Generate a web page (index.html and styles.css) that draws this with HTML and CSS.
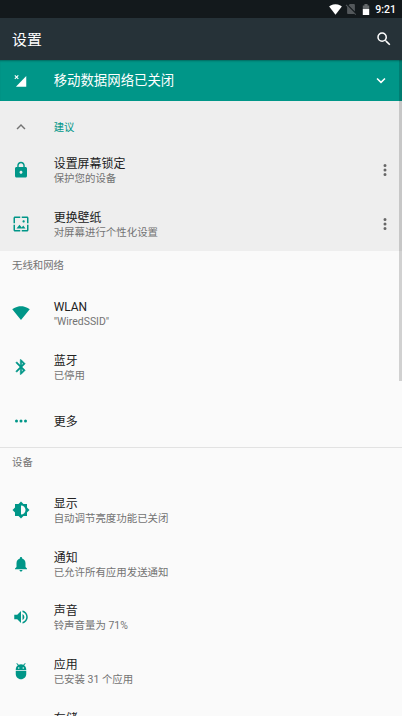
FILE: index.html
```html
<!DOCTYPE html>
<html lang="zh-CN">
<head>
<meta charset="utf-8">
<title>设置</title>
<link rel="stylesheet" href="styles.css">
</head>
<body>
<div class="screen">
  <div class="status">
    <svg class="s-wifi" viewBox="0 0 26 22"><path d="M13 21.500L.3 5C1 4.300 6 .5 13 .5S25 4.300 25.700 5z"/></svg>
    <svg class="s-sim" viewBox="3 3 18 18"><path d="M19 5c0-1.100-.9-2-2-2h-7L7.660 5.340 19 16.680zM3.650 3.880L2.380 5.150 5 7.770V19c0 1.100.9 2 2 2h10.010c.35 0 .67-.1.960-.26l1.880 1.880 1.270-1.270z"/></svg>
    <svg class="s-bat" viewBox="0 0 8 12"><path class="dim" d="M.5 1.500h1.800V0h3.400v1.500h1.800V6h-7z"/><path d="M.5 5.500h7V12h-7z"/></svg>
    <span class="clock">9:21</span>
  </div>
  <header class="appbar">
    <h1>设置</h1>
    <svg class="icon" viewBox="0 0 24 24"><path d="M15.500 14h-.79l-.28-.27A6.471 6.471 0 0 0 16 9.500 6.500 6.500 0 1 0 9.500 16c1.610 0 3.090-.59 4.230-1.570l.27.28v.79l5 4.990L20.490 19l-4.990-5zm-6 0C7.010 14 5 11.990 5 9.500S7.010 5 9.500 5 14 7.010 14 9.500 11.990 14 9.500 14z"/></svg>
  </header>
  <div class="banner">
    <svg class="icon lead" viewBox="0 0 24 24"><path d="M19 5.200v14.300H5.200z"/><path class="cross" d="M3.800 4.500l4.600 4.600M8.400 4.500l-4.600 4.600"/></svg>
    <span class="banner-text">移动数据网络已关闭</span>
    <svg class="icon" viewBox="0 0 24 24"><path d="M7.410 7.840L12 12.420l4.590-4.580L18 9.250l-6 6-6-6z"/></svg>
  </div>
  <section class="suggest">
    <div class="suggest-head">
      <svg class="icon lead" viewBox="0 0 24 24"><path d="M7.410 15.410L12 10.830l4.590 4.580L18 14l-6-6-6 6z"/></svg>
      <span>建议</span>
    </div>
    <div class="row">
      <svg class="icon lead" viewBox="0 0 24 24"><path d="M18 8h-1V6c0-2.760-2.240-5-5-5S7 3.240 7 6v2H6c-1.100 0-2 .9-2 2v10c0 1.100.9 2 2 2h12c1.100 0 2-.9 2-2V10c0-1.100-.9-2-2-2zm-6 9c-1.100 0-2-.9-2-2s.9-2 2-2 2 .9 2 2-.9 2-2 2zm3.100-9H8.900V6c0-1.710 1.390-3.100 3.100-3.100s3.100 1.390 3.100 3.100z"/></svg>
      <div class="text"><div class="title">设置屏幕锁定</div><div class="summary">保护您的设备</div></div>
      <svg class="icon menu" viewBox="0 0 24 24"><path d="M12 8a2 2 0 1 0 0-4 2 2 0 0 0 0 4zm0 2a2 2 0 1 0 0 4 2 2 0 0 0 0-4zm0 6a2 2 0 1 0 0 4 2 2 0 0 0 0-4z"/></svg>
    </div>
    <div class="row">
      <svg class="icon lead" viewBox="0 0 24 24"><path d="M4 4h7V2H4c-1.100 0-2 .9-2 2v7h2zm6 9l-4 5h12l-3-4-2.030 2.710zm7-4.500c0-.83-.67-1.500-1.500-1.500S14 7.670 14 8.500s.67 1.500 1.500 1.500S17 9.330 17 8.500zM20 2h-7v2h7v7h2V4c0-1.100-.9-2-2-2zm0 18h-7v2h7c1.100 0 2-.9 2-2v-7h-2zM4 13H2v7c0 1.100.9 2 2 2h7v-2H4z"/></svg>
      <div class="text"><div class="title">更换壁纸</div><div class="summary">对屏幕进行个性化设置</div></div>
      <svg class="icon menu" viewBox="0 0 24 24"><path d="M12 8a2 2 0 1 0 0-4 2 2 0 0 0 0 4zm0 2a2 2 0 1 0 0 4 2 2 0 0 0 0-4zm0 6a2 2 0 1 0 0 4 2 2 0 0 0 0-4z"/></svg>
    </div>
  </section>
  <section class="group">
    <h2>无线和网络</h2>
    <div class="row">
      <svg class="icon lead" viewBox="0 0 24 24"><path d="M12.010 21.490L23.640 7c-.45-.34-4.930-4-11.640-4C5.280 3 .81 6.660.36 7l11.630 14.490.010.010z"/></svg>
      <div class="text"><div class="title">WLAN</div><div class="summary">"WiredSSID"</div></div>
    </div>
    <div class="row">
      <svg class="icon lead" viewBox="0 0 24 24"><path class="bold" d="M17.710 7.710L12 2h-1v7.590L6.410 5 5 6.410 10.590 12 5 17.590 6.410 19 11 14.410V22h1l5.710-5.710-4.300-4.290zM13 5.830l1.880 1.880L13 9.590zm1.880 10.460L13 18.170v-3.760z"/></svg>
      <div class="text"><div class="title">蓝牙</div><div class="summary">已停用</div></div>
    </div>
    <div class="row">
      <svg class="icon lead" viewBox="0 0 24 24"><path d="M6 10a2 2 0 1 0 0 4 2 2 0 0 0 0-4zm12 0a2 2 0 1 0 0 4 2 2 0 0 0 0-4zm-6 0a2 2 0 1 0 0 4 2 2 0 0 0 0-4z"/></svg>
      <div class="text"><div class="title">更多</div></div>
    </div>
  </section>
  <section class="group divided">
    <h2>设备</h2>
    <div class="row">
      <svg class="icon lead" viewBox="0 0 24 24"><path d="M20 15.310L23.310 12 20 8.690V4h-4.690L12 .69 8.690 4H4v4.690L.69 12 4 15.310V20h4.690L12 23.310 15.310 20H20zM12 18V6c3.310 0 6 2.690 6 6s-2.690 6-6 6z"/></svg>
      <div class="text"><div class="title">显示</div><div class="summary">自动调节亮度功能已关闭</div></div>
    </div>
    <div class="row">
      <svg class="icon lead" viewBox="0 0 24 24"><path d="M12 22c1.100 0 2-.9 2-2h-4c0 1.100.9 2 2 2zm6-6v-5c0-3.070-1.640-5.640-4.500-6.320V4c0-.83-.67-1.500-1.500-1.500s-1.500.67-1.500 1.500v.68C7.630 5.360 6 7.920 6 11v5l-2 2v1h16v-1z"/></svg>
      <div class="text"><div class="title">通知</div><div class="summary">已允许所有应用发送通知</div></div>
    </div>
    <div class="row">
      <svg class="icon lead" viewBox="0 0 24 24"><path d="M3 9v6h4l5 5V4L7 9zm13.500 3A4.500 4.500 0 0 0 14 7.970v8.050c1.480-.73 2.500-2.250 2.500-4.020zM14 3.230v2.060c2.890.86 5 3.540 5 6.710s-2.110 5.850-5 6.710v2.060c4.010-.91 7-4.490 7-8.770s-2.990-7.860-7-8.770z"/></svg>
      <div class="text"><div class="title">声音</div><div class="summary">铃声音量为 71%</div></div>
    </div>
    <div class="row">
      <svg class="icon lead" viewBox="0 0 24 24"><path d="M5 16c0 3.870 3.130 7 7 7s7-3.130 7-7v-4H5zM16.120 4.370l2.100-2.100-.82-.83-2.300 2.310C14.160 3.280 13.120 3 12 3s-2.160.28-3.090.75L6.600 1.440l-.82.83 2.100 2.100C6.140 5.640 5 7.680 5 10v1h14v-1c0-2.320-1.140-4.360-2.880-5.630zM9 9a1 1 0 1 1 0-2 1 1 0 0 1 0 2zm6 0a1 1 0 1 1 0-2 1 1 0 0 1 0 2z"/></svg>
      <div class="text"><div class="title">应用</div><div class="summary">已安装 31 个应用</div></div>
    </div>
    <div class="row">
      <svg class="icon lead" viewBox="0 0 24 24"><path d="M2 20h20v-4H2zM2 4v4h20V4zm0 10h20v-4H2z"/></svg>
      <div class="text"><div class="title">存储</div><div class="summary"></div></div>
    </div>
  </section>
  <div class="scrollbar"></div>
</div>
</body>
</html>
```
FILE: styles.css
```css
* { box-sizing: border-box; }
body {
  margin: 0;
  font-family: Roboto, "Noto Sans CJK SC", sans-serif;
  background: #fafafa;
}
.screen {
  position: relative;
  height: 716px;
  overflow: hidden;
}
svg { display: block; fill: currentColor; flex: none; }
.icon { width: 18px; height: 18px; }
.lead { margin-right: 23.700px; }
.status {
  height: 18px;
  display: flex;
  align-items: center;
  padding-right: 6px;
  justify-content: flex-end;
  background: #13191c;
  color: #fff;
}
.s-wifi { width: 13px; height: 11px; margin-right: 4px; }
.s-sim { width: 10px; height: 10px; margin-right: 6px; color: #53585b; overflow: visible; }
.s-bat { width: 8px; height: 11px; margin-right: 5px; }
.dim { fill: #65696b; }
.clock { font-size: 10.500px; font-weight: 500; line-height: 18px; padding-top: 1px; }
.appbar {
  height: 42px;
  display: flex;
  align-items: center;
  justify-content: space-between;
  padding: 0 9px 0 12px;
  background: #263238;
  color: #fff;
}
.appbar h1 { margin: 0; padding-top: 1px; font-size: 14.900px; font-weight: 400; line-height: 22px; }
.banner {
  height: 41px;
  display: flex;
  align-items: center;
  padding: 0 12px;
  background: #009688;
  color: #fff;
  box-shadow: inset 0 2px 2px -1px rgba(0, 0, 0, .3);
}
.banner-text { flex: 1; padding-top: 1px; font-size: 13.400px; line-height: 20px; }
.cross { stroke: #fff; stroke-width: 1.5; fill: none; }
.bold { stroke: currentColor; stroke-width: .6; }
.suggest { background: #eee; height: 149.500px; }
.suggest-head {
  height: 42px;
  display: flex;
  align-items: center;
  padding: 10px 12px 0;
  color: #737373;
  font-size: 10.400px;
}
.suggest-head span { color: #009688; line-height: 14px; padding-top: 1px; }
.row {
  height: 53.700px;
  display: flex;
  align-items: center;
  padding: 0 7.800px 0 12px;
  color: #009688;
}
.text { flex: 1; padding-top: 2px; }
.title { font-size: 11.940px; line-height: 16px; color: #212121; }
.summary { min-height: 14px; font-size: 10.440px; line-height: 14px; color: #737373; }
.menu { color: #666; }
.group h2 {
  margin: 0;
  height: 36px;
  padding: 7.400px 12px 0;
  font-size: 10.400px;
  font-weight: 400;
  line-height: 16px;
  color: #737373;
}
.divided { border-top: 1px solid #e2e2e2; margin-top: -.800px; }
.divided h2 { height: 35.500px; padding-top: 7.400px; }
.scrollbar {
  position: absolute;
  right: 0;
  top: 60px;
  width: 3px;
  height: 321px;
  background: rgba(0, 0, 0, .16);
}
```
